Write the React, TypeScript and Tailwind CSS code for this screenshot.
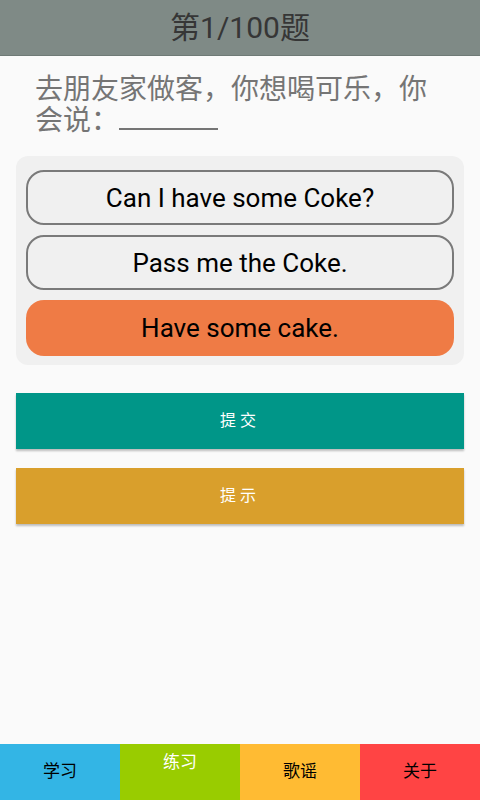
import React from "react";

const font = { fontFamily: '"Roboto", "Noto Sans CJK SC", sans-serif' };

export default function App() {
  const opts = ["Can I have some Coke?", "Pass me the Coke."];
  return (
    <div className="w-[480px] h-[800px] bg-[#fafafa] flex flex-col overflow-hidden" style={font}>
      <div className="h-[56px] bg-[#7f8a86] flex items-center justify-center text-[30px] text-[#363636] border-b border-[#6f7a76]">
        第1/100题
      </div>
      <div className="pl-[35px] pr-[45px] pt-[18px] text-[28px] leading-[31px] text-[#757575]">
        去朋友家做客，你想喝可乐，你会说：<span className="inline-block w-[99px] border-b-2 border-[#757575] h-[24px] align-baseline"></span>
      </div>
      <div className="mx-[16px] mt-[20px] rounded-[12px] bg-[#f0f0f0] pl-[10px] pr-[10px] pt-[14px] pb-[9px] flex flex-col gap-[10px]">
        {opts.map((o) => (
          <div key={o} className="h-[55px] rounded-[18px] border-2 border-[#7a7a7a] flex items-center justify-center text-[26px] leading-[30px] text-black">
            {o}
          </div>
        ))}
        <div className="h-[56px] rounded-[18px] bg-[#ef7b45] flex items-center justify-center text-[26px] leading-[30px] text-black">
          Have some cake.
        </div>
      </div>
      <div className="mx-[16px] mt-[28px] h-[56px] bg-[#009688] flex items-center justify-center text-white text-[16px] tracking-[4px] shadow-[0_2px_2px_rgba(0,0,0,0.25)]">
        提交
      </div>
      <div className="mx-[16px] mt-[19px] h-[56px] bg-[#d99f2c] flex items-center justify-center text-white text-[16px] tracking-[4px] shadow-[0_2px_2px_rgba(0,0,0,0.25)]">
        提示
      </div>
      <div className="flex-1" />
      <div className="h-[56px] grid grid-cols-4 text-[17px]">
        <div className="bg-[#33b5e5] flex items-center justify-center text-black">学习</div>
        <div className="bg-[#99cc00] flex justify-center text-white pt-[6px] leading-[24px]">练习</div>
        <div className="bg-[#ffbb33] flex items-center justify-center text-black">歌谣</div>
        <div className="bg-[#ff4444] flex items-center justify-center text-black">关于</div>
      </div>
    </div>
  );
}
